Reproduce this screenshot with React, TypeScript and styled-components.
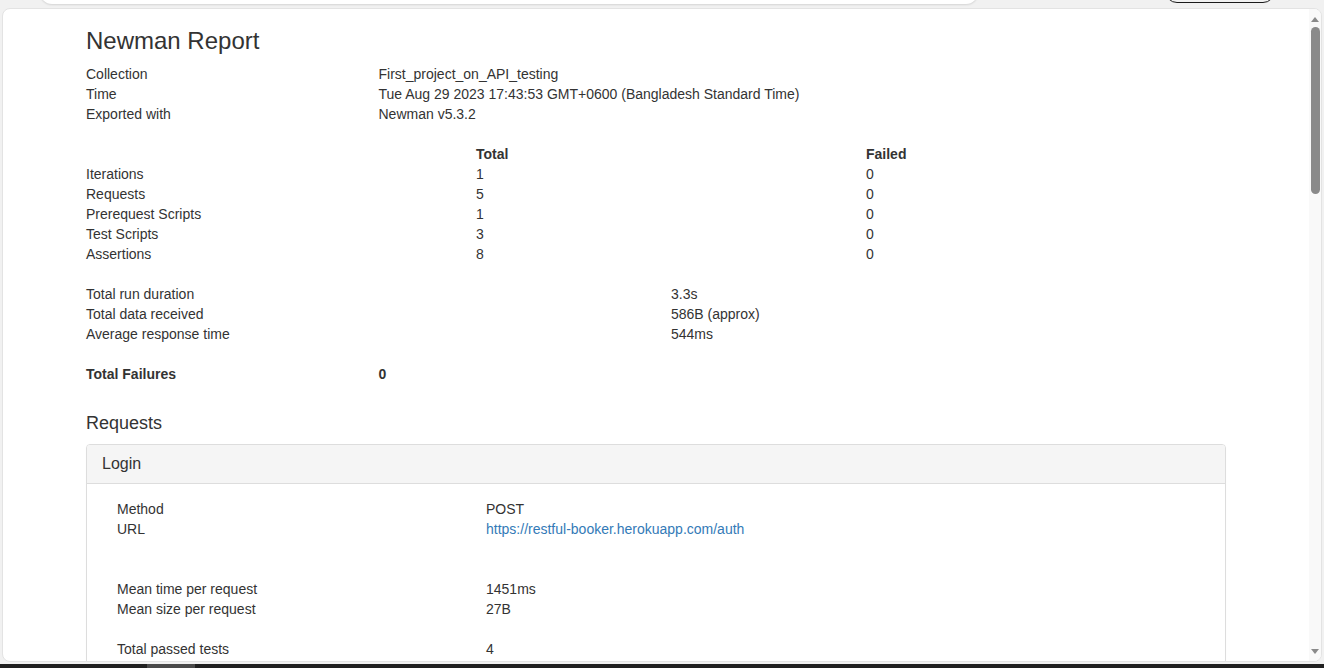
import React from "react";
import styled, { createGlobalStyle } from "styled-components";

const Global = createGlobalStyle`
  html, body { margin: 0; padding: 0; }
  body {
    background: #f1f1f1;
    font-family: "Liberation Sans", Arial, sans-serif;
    font-size: 14px;
    line-height: 20px;
    color: #333;
    width: 1324px;
    height: 668px;
    overflow: hidden;
  }
  #root { height: 668px; display: flex; flex-direction: column; }
`;

const TopBar = styled.div`
  height: 8px;
  display: flex;
  align-items: flex-start;
  overflow: hidden;
  flex-shrink: 0;
`;

const SearchBox = styled.div`
  margin-left: 40px;
  width: 938px;
  height: 30px;
  margin-top: -26px;
  background: #fff;
  border-radius: 12px;
  box-shadow: 0 1px 2px rgba(0, 0, 0, 0.12);
`;

const OutlineButton = styled.div`
  margin-left: 187px;
  width: 110px;
  height: 24px;
  margin-top: -21px;
  border: 1.5px solid #1b1b1b;
  border-radius: 12px;
  box-sizing: border-box;
`;

const Window = styled.div`
  margin: 0 2px;
  height: 654px;
  box-sizing: border-box;
  background: #fff;
  border: 1px solid #e3e3e3;
  border-radius: 8px;
  display: flex;
  overflow: hidden;
  flex-shrink: 0;
`;

const Viewport = styled.div`
  flex: 1;
  overflow: hidden;
`;

const Container = styled.div`
  width: 1140px;
  margin: 0 auto;
  padding-top: 19px;
`;

const Title = styled.h1`
  margin: 0 0 10px;
  font-size: 24px;
  line-height: 26.4px;
  font-weight: 400;
  color: #333;
`;

const SubTitle = styled.h4`
  margin: 30px 0 10px;
  font-size: 18px;
  line-height: 19.8px;
  font-weight: 400;
  color: #333;
`;

const Grid = styled.div<{ $cols: string; $bold?: boolean }>`
  display: grid;
  grid-template-columns: ${(p) => p.$cols};
  font-weight: ${(p) => (p.$bold ? 700 : 400)};
  & > span {
    white-space: nowrap;
    min-height: 20px;
  }
`;

const Spacer = styled.div`
  height: 20px;
`;

const Link = styled.a`
  color: #337ab7;
  text-decoration: none;
`;

const Panel = styled.div`
  border: 1px solid #ddd;
  border-radius: 4px;
  box-shadow: 0 1px 1px rgba(0, 0, 0, 0.05);
`;

const PanelHeading = styled.div`
  background: #f5f5f5;
  border-bottom: 1px solid #ddd;
  padding: 10px 15px;
  border-radius: 3px 3px 0 0;
`;

const PanelTitle = styled.h4`
  margin: 0;
  font-size: 16px;
  line-height: 17.6px;
  font-weight: 400;
  color: #333;
`;

const PanelBody = styled.div`
  padding: 15px 30px;
`;

const Scrollbar = styled.div`
  width: 12px;
  flex-shrink: 0;
  background: #f9f9f9;
  display: flex;
  flex-direction: column;
  align-items: center;
  padding: 8px 0 7px;
`;

const Arrow = styled.div<{ $down?: boolean }>`
  width: 0;
  height: 0;
  border-left: 4px solid transparent;
  border-right: 4px solid transparent;
  ${(p) =>
    p.$down
      ? "border-top: 5px solid #8a8a8a;"
      : "border-bottom: 5px solid #8a8a8a;"}
`;

const Thumb = styled.div`
  margin-top: 5px;
  width: 9px;
  height: 167px;
  border-radius: 5px;
  background: #8a8a8a;
`;

const Track = styled.div`
  flex: 1;
  display: flex;
  flex-direction: column;
  align-items: center;
`;

const Taskbar = styled.div`
  margin-top: auto;
  height: 4px;
  background: #202020;
  display: flex;
  flex-shrink: 0;
`;

const TaskItem = styled.div`
  margin-left: 147px;
  width: 48px;
  background: #4a4a4a;
`;

const info = [
  ["Collection", "First_project_on_API_testing"],
  ["Time", "Tue Aug 29 2023 17:43:53 GMT+0600 (Bangladesh Standard Time)"],
  ["Exported with", "Newman v5.3.2"],
];

const summary = [
  ["Iterations", "1", "0"],
  ["Requests", "5", "0"],
  ["Prerequest Scripts", "1", "0"],
  ["Test Scripts", "3", "0"],
  ["Assertions", "8", "0"],
];

const durations = [
  ["Total run duration", "3.3s"],
  ["Total data received", "586B (approx)"],
  ["Average response time", "544ms"],
];

export default function App() {
  return (
    <>
      <Global />
      <TopBar>
        <SearchBox />
        <OutlineButton />
      </TopBar>
      <Window>
        <Viewport>
          <Container>
            <Title>Newman Report</Title>
            <Grid $cols="292.5px 1fr">
              {info.map(([k, v]) => (
                <React.Fragment key={k}>
                  <span>{k}</span>
                  <span>{v}</span>
                </React.Fragment>
              ))}
            </Grid>
            <Spacer />
            <Grid $cols="390px 390px 1fr">
              <span />
              <b>Total</b>
              <b>Failed</b>
              {summary.map(([k, t, f]) => (
                <React.Fragment key={k}>
                  <span>{k}</span>
                  <span>{t}</span>
                  <span>{f}</span>
                </React.Fragment>
              ))}
            </Grid>
            <Spacer />
            <Grid $cols="585px 1fr">
              {durations.map(([k, v]) => (
                <React.Fragment key={k}>
                  <span>{k}</span>
                  <span>{v}</span>
                </React.Fragment>
              ))}
            </Grid>
            <Spacer />
            <Grid $cols="292.5px 1fr" $bold>
              <span>Total Failures</span>
              <span>0</span>
            </Grid>
            <SubTitle>Requests</SubTitle>
            <Panel>
              <PanelHeading>
                <PanelTitle>Login</PanelTitle>
              </PanelHeading>
              <PanelBody>
                <Grid $cols="369px 1fr">
                  <span>Method</span>
                  <span>POST</span>
                  <span>URL</span>
                  <span>
                    <Link href="#">https://restful-booker.herokuapp.com/auth</Link>
                  </span>
                </Grid>
                <Spacer />
                <Spacer />
                <Grid $cols="369px 1fr">
                  <span>Mean time per request</span>
                  <span>1451ms</span>
                  <span>Mean size per request</span>
                  <span>27B</span>
                </Grid>
                <Spacer />
                <Grid $cols="369px 1fr">
                  <span>Total passed tests</span>
                  <span>4</span>
                </Grid>
              </PanelBody>
            </Panel>
          </Container>
        </Viewport>
        <Scrollbar>
          <Track>
            <Arrow />
            <Thumb />
          </Track>
          <Arrow $down />
        </Scrollbar>
      </Window>
      <Taskbar>
        <TaskItem />
      </Taskbar>
    </>
  );
}
